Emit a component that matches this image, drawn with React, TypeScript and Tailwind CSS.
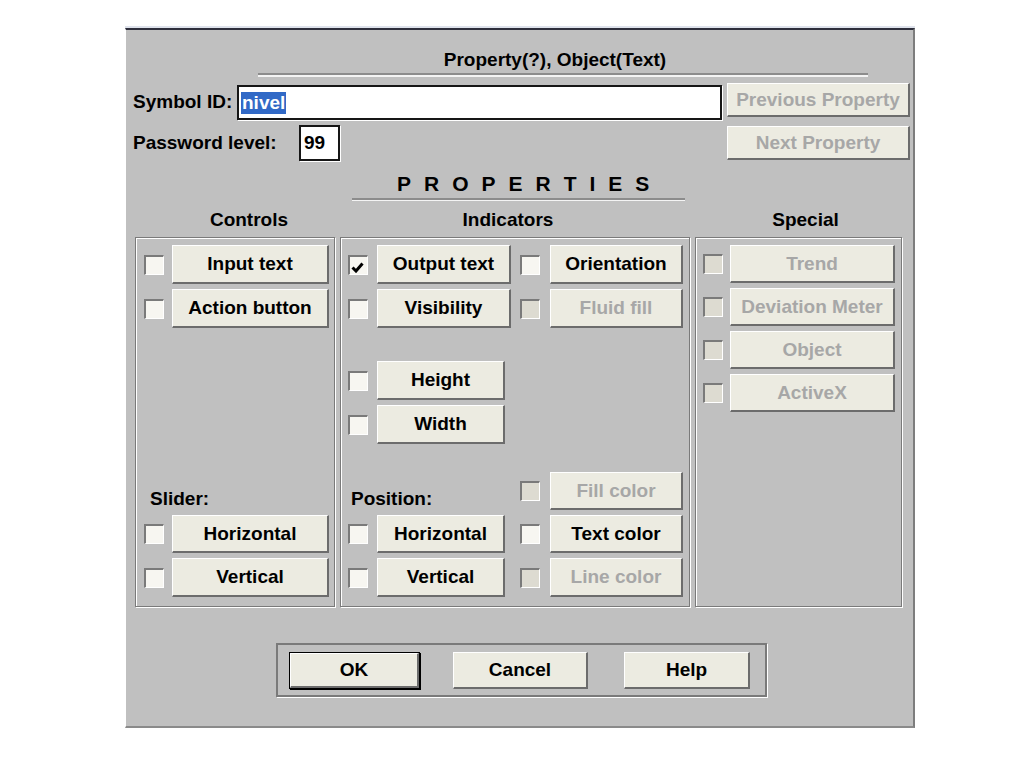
import React from 'react';

const face = 'bg-[#ecebe1]';
const raised =
  'border-t border-l border-t-white border-l-white border-r-2 border-b-2 border-r-[#6c6c6c] border-b-[#6c6c6c]';

const Check = () => (
  <svg width="13" height="11" viewBox="0 0 13 11" className="mt-[5px] ml-[1px]">
    <polyline points="1.5,5.5 5,9 11.5,1.5" fill="none" stroke="#000" strokeWidth="3" />
  </svg>
);

const Box = ({ checked, disabled }: { checked?: boolean; disabled?: boolean }) => (
  <div
    className={`flex h-[20px] w-[20px] shrink-0 items-start justify-start border-t-2 border-l-2 border-t-[#7a7a7a] border-l-[#7a7a7a] border-r border-b border-r-white border-b-white ${
      disabled ? 'bg-[#dddbd1]' : 'bg-[#f7f6f1]'
    }`}
  >
    {checked && <Check />}
  </div>
);

const Btn = ({
  label,
  w,
  h = 'h-[39px]',
  disabled,
}: {
  label: string;
  w: string;
  h?: string;
  disabled?: boolean;
}) => (
  <div
    className={`flex shrink-0 items-center justify-center ${face} ${raised} ${w} ${h} text-[19px] font-bold leading-[22px] ${
      disabled ? 'text-[#a7a7a7]' : 'text-black'
    }`}
  >
    {label}
  </div>
);

const Row = ({
  label,
  w,
  h,
  checked,
  disabled,
  gap = 'gap-[8px]',
}: {
  label: string;
  w: string;
  h?: string;
  checked?: boolean;
  disabled?: boolean;
  gap?: string;
}) => (
  <div className={`flex items-center ${gap}`}>
    <Box checked={checked} disabled={disabled} />
    <Btn label={label} w={w} h={h} disabled={disabled} />
  </div>
);

const groupBox =
  'border border-[#7a7a7a] shadow-[inset_1px_1px_0_#ffffff,1px_1px_0_#ffffff] h-[370px]';

export default function App() {
  return (
    <div className="min-h-[768px] w-[1024px] bg-white pt-[28px] font-['Liberation_Sans',Arial,sans-serif]">
      <div className="ml-[125px] h-[700px] w-[790px] border-t-2 border-l border-r-2 border-b-2 border-t-[#2e2f3c] border-l-white border-r-[#7d7d7d] border-b-[#8a8a8a] bg-[#c0c0c0] shadow-[0_-2px_0_#dfe3ec]">
        {/* title */}
        <div className="ml-[132px] w-[610px] pt-[19px]">
          <div className="pr-[16px] text-center text-[19px] font-bold leading-[22px] text-black">
            Property(?), Object(Text)
          </div>
          <div className="mt-[2px] h-[4px] border-t-2 border-b-2 border-t-[#8c8c8c] border-b-[#f4f4f4]" />
        </div>

        {/* symbol id */}
        <div className="mt-[6px] flex h-[37px] items-start">
          <div className="flex h-[37px] w-[111px] items-center pl-[7px] text-[19px] font-bold leading-[22px]">
            Symbol ID:
          </div>
          <div className="mt-[2px] flex h-[35px] w-[485px] items-center border-2 border-[#161616] bg-white pl-[2px] shadow-[1px_1px_0_#ffffff]">
            <span className="bg-[#3169c6] px-[1px] text-[19px] font-bold leading-[22px] text-white">nivel</span>
          </div>
          <div className="ml-[5px]">
            <Btn label="Previous Property" w="w-[183px]" h="h-[34px]" disabled />
          </div>
        </div>

        {/* password level */}
        <div className="mt-[5px] flex h-[36px] items-start">
          <div className="flex h-[36px] w-[173px] items-center pl-[7px] text-[19px] font-bold leading-[22px]">
            Password level:
          </div>
          <div className="flex h-[36px] w-[41px] items-center border-2 border-[#161616] bg-white pl-[3px] text-[19px] font-bold leading-[22px] shadow-[1px_1px_0_#ffffff]">
            99
          </div>
          <div className="ml-[387px] mt-[1px]">
            <Btn label="Next Property" w="w-[183px]" h="h-[34px]" disabled />
          </div>
        </div>

        {/* PROPERTIES heading */}
        <div className="ml-[271px] mt-[11px] text-[21px] font-bold leading-[24px] tracking-[13px]">PROPERTIES</div>
        <div className="ml-[226px] mt-[2px] h-[3px] w-[333px] border-t-2 border-b border-t-[#8c8c8c] border-b-[#f4f4f4]" />

        {/* group titles */}
        <div className="ml-[9px] mt-[8px] flex gap-[5px] text-[19px] font-bold leading-[22px]">
          <div className="w-[200px] pl-[28px] text-center">Controls</div>
          <div className="w-[350px] pr-[14px] text-center">Indicators</div>
          <div className="w-[207px] pl-[14px] text-center">Special</div>
        </div>

        {/* group boxes */}
        <div className="ml-[9px] mt-[6px] flex gap-[5px]">
          {/* Controls */}
          <div className={`flex w-[200px] flex-col justify-between pt-[7px] pb-[9px] pl-[8px] ${groupBox}`}>
            <div className="flex flex-col gap-[5px]">
              <Row label="Input text" w="w-[157px]" />
              <Row label="Action button" w="w-[157px]" />
            </div>
            <div className="flex flex-col gap-[5px]">
              <div className="pl-[6px] text-[19px] font-bold leading-[22px]">Slider:</div>
              <div className="flex flex-col gap-[5px]">
                <Row label="Horizontal" w="w-[157px]" h="h-[38px]" />
                <Row label="Vertical" w="w-[157px]" h="h-[39px]" />
              </div>
            </div>
          </div>

          {/* Indicators */}
          <div className={`flex w-[350px] pt-[7px] pb-[9px] pl-[7px] ${groupBox}`}>
            <div className="flex w-[172px] flex-col justify-between">
              <div className="flex flex-col">
                <div className="flex flex-col gap-[5px]">
                  <Row label="Output text" w="w-[134px]" gap="gap-[9px]" checked />
                  <Row label="Visibility" w="w-[134px]" gap="gap-[9px]" />
                </div>
                <div className="mt-[33px] flex flex-col gap-[5px]">
                  <Row label="Height" w="w-[128px]" gap="gap-[9px]" />
                  <Row label="Width" w="w-[128px]" gap="gap-[9px]" />
                </div>
              </div>
              <div className="flex flex-col gap-[5px]">
                <div className="pl-[3px] text-[19px] font-bold leading-[22px]">Position:</div>
                <div className="flex flex-col gap-[5px]">
                  <Row label="Horizontal" w="w-[128px]" h="h-[38px]" gap="gap-[9px]" />
                  <Row label="Vertical" w="w-[128px]" gap="gap-[9px]" />
                </div>
              </div>
            </div>
            <div className="flex flex-col justify-between">
              <div className="flex flex-col gap-[5px]">
                <Row label="Orientation" w="w-[133px]" gap="gap-[10px]" />
                <Row label="Fluid fill" w="w-[133px]" gap="gap-[10px]" disabled />
              </div>
              <div className="flex flex-col gap-[5px]">
                <Row label="Fill color" w="w-[133px]" h="h-[38px]" gap="gap-[10px]" disabled />
                <Row label="Text color" w="w-[133px]" h="h-[38px]" gap="gap-[10px]" />
                <Row label="Line color" w="w-[133px]" gap="gap-[10px]" disabled />
              </div>
            </div>
          </div>

          {/* Special */}
          <div className={`flex w-[207px] flex-col gap-[5px] pt-[7px] pl-[7px] ${groupBox}`}>
            <Row label="Trend" w="w-[165px]" h="h-[38px]" gap="gap-[7px]" disabled />
            <Row label="Deviation Meter" w="w-[165px]" h="h-[38px]" gap="gap-[7px]" disabled />
            <Row label="Object" w="w-[165px]" h="h-[38px]" gap="gap-[7px]" disabled />
            <Row label="ActiveX" w="w-[165px]" h="h-[38px]" gap="gap-[7px]" disabled />
          </div>
        </div>

        {/* OK / Cancel / Help */}
        <div className="ml-[150px] mt-[36px] flex h-[54px] w-[491px] items-start border-2 border-[#7a7a7a] pt-[7px] pl-[11px] shadow-[1px_1px_0_#ffffff]">
          <div className="border border-black shadow-[1px_1px_0_#000000]">
            <div
              className={`flex h-[35px] w-[129px] items-center justify-center ${face} ${raised} text-[19px] font-bold leading-[22px]`}
            >
              OK
            </div>
          </div>
          <div className="ml-[33px]">
            <Btn label="Cancel" w="w-[135px]" h="h-[37px]" />
          </div>
          <div className="ml-[36px]">
            <Btn label="Help" w="w-[126px]" h="h-[37px]" />
          </div>
        </div>
      </div>
    </div>
  );
}
